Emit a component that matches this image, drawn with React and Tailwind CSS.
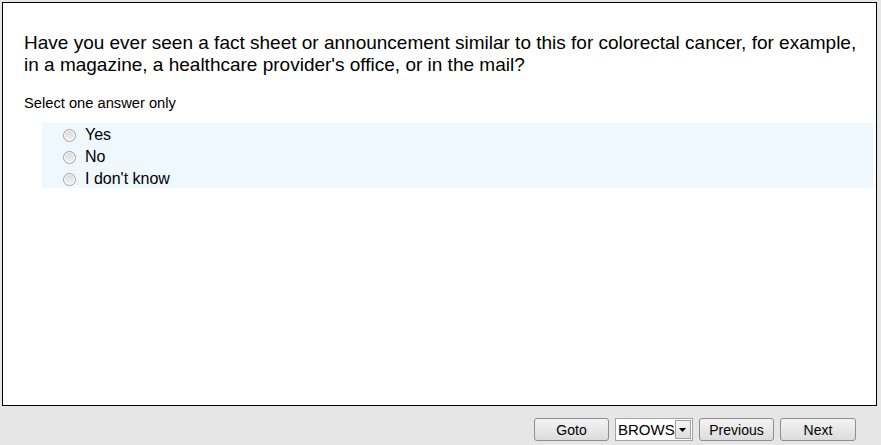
const Radio = () => (
  <span className="w-[13px] h-[13px] rounded-full border border-[#a0a0a0] bg-gradient-to-b from-[#d8d8d8] to-[#f4f4f4] shadow-[inset_0_0_0_1px_#ffffff] shrink-0" />
);

const Btn = ({ children, w }) => (
  <button
    className={`h-[23px] ${w} rounded-[3px] border border-[#8e8e8e] bg-gradient-to-b from-[#f4f4f4] to-[#dcdcdc] text-[14px] text-black leading-none`}
  >
    {children}
  </button>
);

export default function App() {
  const options = ["Yes", "No", "I don't know"];
  return (
    <div
      className="w-[881px] h-[445px] bg-[#e6e6e6] pt-[2px] pl-[2px] pr-[4px] flex flex-col"
      style={{ fontFamily: '"Liberation Sans", Arial, sans-serif' }}
    >
      <div className="h-[404px] bg-white border border-black flex flex-col">
        <div className="pl-[21px] pt-[29px] text-[19px] leading-[22px] text-black">
          Have you ever seen a fact sheet or announcement similar to this for colorectal cancer, for example,
          <br />
          in a magazine, a healthcare provider's office, or in the mail?
        </div>
        <div className="pl-[21px] pt-[19px] text-[14.7px] leading-[16px] text-black">Select one answer only</div>
        <div className="ml-[39px] mr-[3px] mt-[12px] bg-[#f0f8ff] pl-[21px] pt-[1px] h-[65px]">
          {options.map((o) => (
            <div key={o} className="flex items-center gap-[9px] h-[22px] text-[16px] text-black">
              <Radio />
              <span>{o}</span>
            </div>
          ))}
        </div>
      </div>
      <div className="flex items-center justify-end gap-[6px] pr-[21px] pt-[12px]">
        <Btn w="w-[75px]">Goto</Btn>
        <div className="h-[23px] w-[78px] border border-[#a5a5a5] bg-white flex items-center">
          <span className="flex-1 text-[15px] leading-none pl-[2px] text-black">BROWS</span>
          <span className="w-[17px] h-[19px] mr-[1px] border border-[#a0a0a0] bg-gradient-to-b from-[#f6f6f6] to-[#dedede] flex items-center justify-center">
            <svg width="7" height="4" viewBox="0 0 7 4"><path d="M0 0h7L3.5 4z" fill="#000" /></svg>
          </span>
        </div>
        <Btn w="w-[75px]">Previous</Btn>
        <Btn w="w-[76px]">Next</Btn>
      </div>
    </div>
  );
}
